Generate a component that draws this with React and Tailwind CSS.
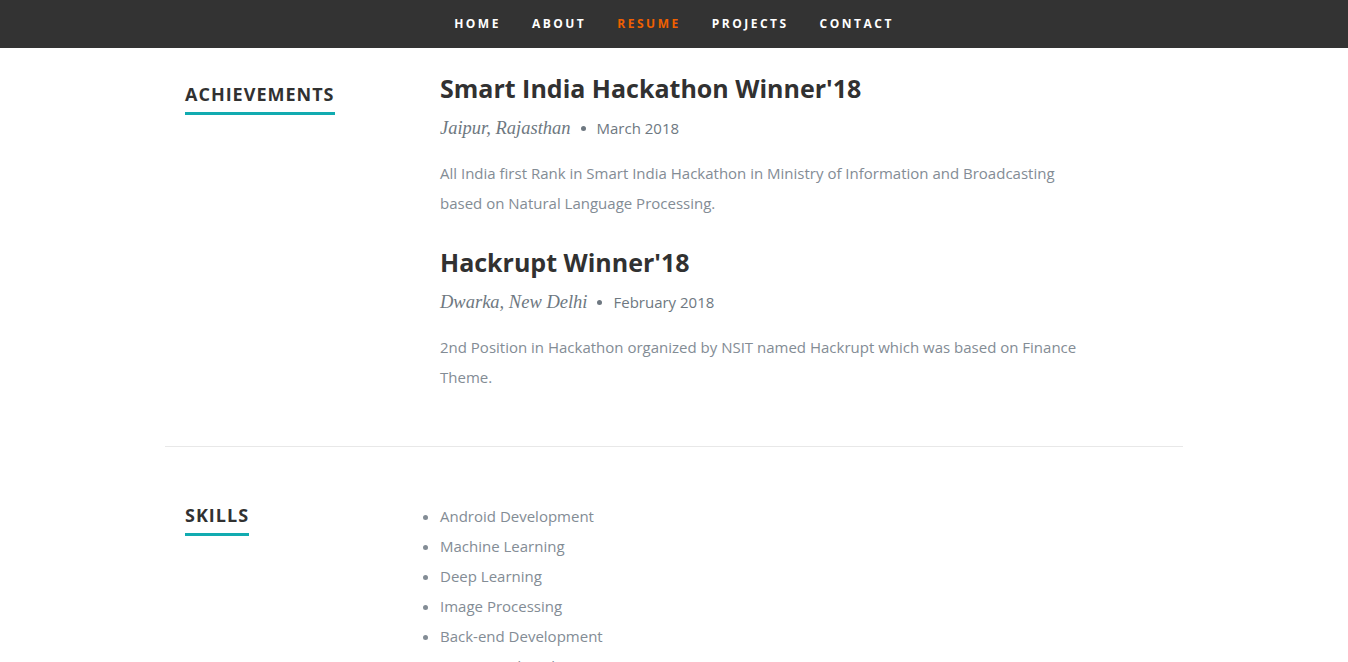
import React from "react";

const sans = { fontFamily: '"Open Sans", "Liberation Sans", sans-serif' };
const serif = { fontFamily: '"Liberation Serif", serif' };

const navItems = ["Home", "About", "Resume", "Projects", "Contact"];

function SectionHeading({ children, className = "" }) {
  return (
    <h1
      className={`text-[18px] leading-[24px] font-bold uppercase tracking-[1px] text-[#313131] ${className}`}
    >
      <span className="border-b-[3px] border-[#11ABB0] pb-[6px]">{children}</span>
    </h1>
  );
}

function Item({ title, place, date, text, className = "" }) {
  return (
    <div className={className}>
      <h3 className="text-[25px] leading-[28px] font-bold text-[#313131]">{title}</h3>
      <p className="mt-[14px] flex items-center leading-[24px] text-[#6E7881]">
        <em className="italic text-[18.5px]" style={serif}>{place}</em>
        <span className="ml-[10px] mr-[11px] inline-block h-[5px] w-[5px] rounded-full bg-[#6E7881]"></span>
        <span className="text-[15px]">{date}</span>
      </p>
      <p className="mt-[18px] max-w-[645px] text-[15px] leading-[30px] text-[#838C95]">{text}</p>
    </div>
  );
}

export default function App() {
  return (
    <div className="min-h-screen bg-white" style={sans}>
      <nav className="h-12 bg-[#333333] flex justify-center">
        <ul className="flex">
          {navItems.map((n) => (
            <li key={n}>
              <a
                className={`block px-[15.5px] leading-[48px] text-[12px] font-bold uppercase tracking-[2.5px] ${
                  n === "Resume" ? "text-[#F06000]" : "text-white"
                }`}
              >
                {n}
              </a>
            </li>
          ))}
        </ul>
      </nav>

      <div className="mx-auto w-[1018px]">
        <section className="flex pt-[26px] pb-[54px] border-b border-[#E8E8E8]">
          <div className="w-[255px] px-5">
            <SectionHeading className="mt-[8px]">Achievements</SectionHeading>
          </div>
          <div className="w-[763px] px-5">
            <Item
              title="Smart India Hackathon Winner'18"
              place="Jaipur, Rajasthan"
              date="March 2018"
              text="All India first Rank in Smart India Hackathon in Ministry of Information and Broadcasting based on Natural Language Processing."
            />
            <Item
              className="mt-[30px]"
              title="Hackrupt Winner'18"
              place="Dwarka, New Delhi"
              date="February 2018"
              text="2nd Position in Hackathon organized by NSIT named Hackrupt which was based on Finance Theme."
            />
          </div>
        </section>

        <section className="flex pt-[54px] pb-10">
          <div className="w-[255px] px-5">
            <SectionHeading className="mt-[2px]">Skills</SectionHeading>
          </div>
          <div className="w-[763px] px-5">
            <ul className="list-disc list-outside text-[15px] leading-[30px] text-[#838C95] marker:text-[#838C95]">
              <li>Android Development</li>
              <li>Machine Learning</li>
              <li>Deep Learning</li>
              <li>Image Processing</li>
              <li>Back-end Development</li>
              <li>Augmented Reality</li>
            </ul>
          </div>
        </section>
      </div>
    </div>
  );
}
